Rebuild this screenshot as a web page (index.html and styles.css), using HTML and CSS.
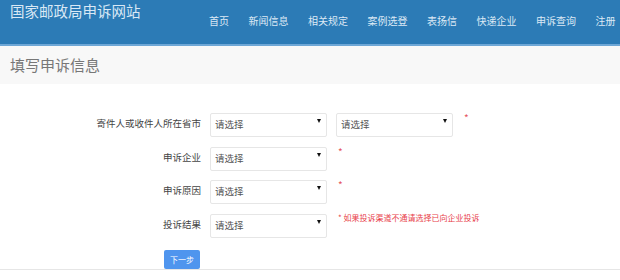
FILE: index.html
```html
<!DOCTYPE html>
<html lang="zh-CN">

<head>
    <meta charset="UTF-8">
    <meta name="viewport" content="width=device-width, initial-scale=1.0">
    <title>国家邮政局申诉网站</title>
    <link rel="stylesheet" href="styles.css">
</head>

<body>
    <div class="header">
        <div class="logo">国家邮政局申诉网站</div>
        <ul class="nav">
            <li>首页</li>
            <li>新闻信息</li>
            <li>相关规定</li>
            <li>案例选登</li>
            <li>表扬信</li>
            <li>快递企业</li>
            <li>申诉查询</li>
            <li>注册</li>
        </ul>
    </div>

    <div class="page-title">填写申诉信息</div>

    <form class="complaint-form">
        <div class="form-row">
            <label>寄件人或收件人所在省市</label>
            <div class="select-wrap">
                <select><option>请选择</option></select>
            </div>
            <div class="select-wrap">
                <select><option>请选择</option></select>
            </div>
            <span class="required">*</span>
        </div>

        <div class="form-row">
            <label>申诉企业</label>
            <div class="select-wrap">
                <select><option>请选择</option></select>
            </div>
            <span class="required">*</span>
        </div>

        <div class="form-row">
            <label>申诉原因</label>
            <div class="select-wrap">
                <select><option>请选择</option></select>
            </div>
            <span class="required">*</span>
        </div>

        <div class="form-row">
            <label>投诉结果</label>
            <div class="select-wrap">
                <select><option>请选择</option></select>
            </div>
            <span class="hint">* 如果投诉渠道不通请选择已向企业投诉</span>
        </div>

        <button type="button" class="next-btn">下一步</button>
    </form>

    <div class="footer"></div>
</body>

</html>
```

FILE: styles.css
```css
body {
    margin: 0;
    font-family: "Noto Sans CJK SC", "Noto Sans", sans-serif;
    background: #fff;
    overflow: hidden;
}

.header {
    height: 44px;
    background-color: #2c7bb6;
    border-bottom: 2px solid #6ea7d6;
    display: flex;
    align-items: flex-start;
}

.logo {
    color: #d9e8f5;
    font-size: 14.5px;
    line-height: 14px;
    padding: 4px 0 0 10px;
    width: 199px;
    box-sizing: border-box;
}

.nav {
    list-style: none;
    margin: 0;
    padding: 15px 0 0 10px;
    display: flex;
    gap: 19.5px;
    white-space: nowrap;
}

.nav li {
    color: #dce9f5;
    font-size: 10px;
    line-height: 12px;
}

.page-title {
    height: 38px;
    background: #f8f8f8;
    color: #777;
    font-size: 15px;
    line-height: 38px;
    padding-left: 10px;
}

.complaint-form {
    padding-top: 25px;
}

.form-row {
    display: flex;
    align-items: flex-start;
    height: 24px;
    margin-bottom: 9.5px;
}

.form-row label {
    width: 201px;
    text-align: right;
    font-size: 9.5px;
    line-height: 14px;
    padding-top: 7px;
    color: #444;
    margin-right: 9px;
}

.select-wrap {
    position: relative;
    width: 117px;
    height: 24px;
    margin-right: 9px;
}

.select-wrap select {
    appearance: none;
    -webkit-appearance: none;
    width: 100%;
    height: 100%;
    border: 1px solid #e6e6e6;
    border-radius: 2px;
    background: #fff;
    font-family: inherit;
    font-size: 9.5px;
    line-height: 20px;
    color: #555;
    padding: 0 0 2px 4px;
}

.select-wrap::after {
    content: "";
    position: absolute;
    right: 6px;
    top: 10px;
    border-left: 2.5px solid transparent;
    border-right: 2.5px solid transparent;
    border-top: 4px solid #111;
    pointer-events: none;
}

.required {
    color: #e5555e;
    font-size: 10px;
    line-height: 10px;
    margin-left: 2px;
    padding-top: 4px;
}

.hint {
    color: #e8424a;
    font-size: 8px;
    line-height: 10px;
    margin-left: 2px;
    padding-top: 3px;
    white-space: nowrap;
}

.next-btn {
    margin: 16px 0 0 164px;
    width: 36px;
    height: 19px;
    padding: 0;
    border: none;
    border-radius: 2px;
    background-color: #4f95ee;
    color: #fff;
    font-family: inherit;
    font-size: 8px;
    cursor: pointer;
    display: block;
}

.footer {
    border-top: 1px solid #e6e6e6;
}
```
